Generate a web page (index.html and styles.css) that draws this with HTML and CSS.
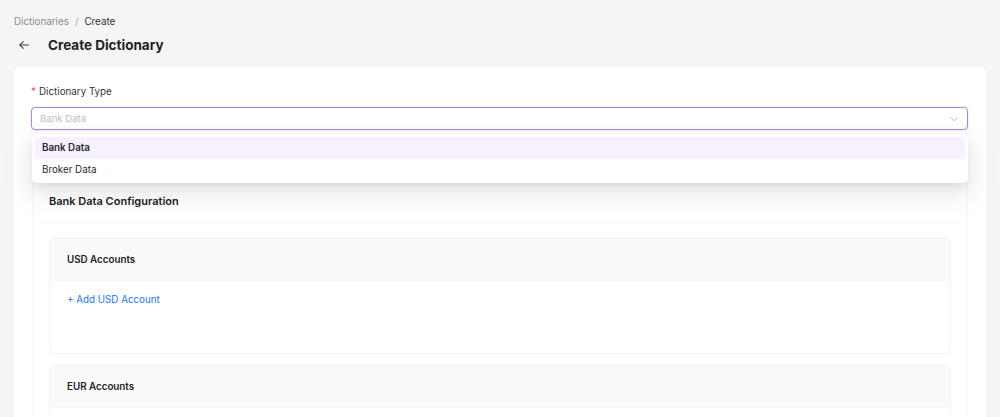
FILE: index.html
```html
<!DOCTYPE html>
<html lang="en">
<head>
    <meta charset="UTF-8">
    <meta name="viewport" content="width=device-width, initial-scale=1.0">
    <title>Create Dictionary</title>
    <link rel="stylesheet" href="styles.css">
</head>
<body>
    <div class="page">
        <div class="breadcrumb">
            <span class="crumb-link">Dictionaries</span>
            <span class="crumb-sep">/</span>
            <span class="crumb-current">Create</span>
        </div>
        <div class="page-header">
            <button class="back-btn" aria-label="Back">
                <svg width="12" height="12" viewBox="0 0 16 16" fill="none" stroke="currentColor" stroke-width="1.5" stroke-linecap="round" stroke-linejoin="round">
                    <path d="M14 8H2.5"/>
                    <path d="M7 3.5L2.5 8L7 12.5"/>
                </svg>
            </button>
            <h1>Create Dictionary</h1>
        </div>

        <div class="main-card">
            <div class="form-item">
                <label class="form-label"><span class="required">*</span>Dictionary Type</label>
                <div class="select-wrap">
                    <div class="select">
                        <span class="select-placeholder">Bank Data</span>
                        <svg class="select-arrow" width="10" height="10" viewBox="0 0 16 16" fill="none" stroke="currentColor" stroke-width="1.6" stroke-linecap="round" stroke-linejoin="round">
                            <path d="M3 6l5 5 5-5"/>
                        </svg>
                    </div>
                    <div class="dropdown">
                        <div class="option option-active">Bank Data</div>
                        <div class="option">Broker Data</div>
                    </div>
                </div>
            </div>

            <div class="config-card">
                <div class="config-head">Bank Data Configuration</div>
                <div class="config-body">
                    <div class="sub-card">
                        <div class="sub-head">USD Accounts</div>
                        <div class="sub-body">
                            <a class="add-link" href="#">+ Add USD Account</a>
                        </div>
                    </div>
                    <div class="sub-card">
                        <div class="sub-head">EUR Accounts</div>
                        <div class="sub-body"></div>
                    </div>
                </div>
            </div>
        </div>
    </div>
</body>
</html>
```

FILE: styles.css
```css
* {
    margin: 0;
    padding: 0;
    box-sizing: border-box;
}

body {
    font-family: 'Inter', 'Liberation Sans', sans-serif;
    background: #f5f5f5;
    color: #1f1f1f;
    overflow: hidden;
    height: 100vh;
}

.page {
    padding: 15px 14px 0 14px;
}

.breadcrumb {
    font-size: 9.8px;
    line-height: 14px;
    display: flex;
    gap: 6px;
}

.crumb-link {
    color: #8c8c8c;
}

.crumb-sep {
    color: #a6a6a6;
}

.crumb-current {
    color: #333;
}

.page-header {
    display: flex;
    align-items: center;
    height: 31px;
    gap: 14px;
}

.back-btn {
    border: none;
    background: none;
    color: #444;
    width: 20px;
    height: 20px;
    display: flex;
    align-items: center;
    justify-content: center;
}

.page-header h1 {
    font-size: 13.5px;
    font-weight: 650;
    color: #222;
}

.main-card {
    margin-top: 7px;
    background: #fff;
    border-radius: 6px;
    padding: 17px 18px 0 17px;
    height: 400px;
}

.form-item {
    margin-bottom: 49px;
}

.form-label {
    display: block;
    font-size: 9.8px;
    color: #333;
    line-height: 14px;
    margin-bottom: 8px;
}

.required {
    color: #ff4d4f;
    margin-right: 3px;
    font-size: 10px;
}

.select-wrap {
    position: relative;
}

.select {
    height: 23px;
    border: 1px solid #a48ad8;
    border-radius: 4px;
    display: flex;
    align-items: center;
    justify-content: space-between;
    padding: 0 8px;
    box-shadow: 0 0 0 1px rgba(164, 138, 216, 0.12);
}

.select-placeholder {
    font-size: 9.6px;
    color: #bfbfbf;
}

.select-arrow {
    color: #bfbfbf;
}

.dropdown {
    position: absolute;
    top: 28px;
    left: 1px;
    right: 0;
    background: #fff;
    border-radius: 5px;
    padding: 2px 3px;
    box-shadow: 0 6px 16px rgba(0, 0, 0, 0.08), 0 3px 6px -4px rgba(0, 0, 0, 0.12), 0 9px 28px 8px rgba(0, 0, 0, 0.05);
    z-index: 10;
}

.option {
    font-size: 9.8px;
    color: #2a2a2a;
    height: 22px;
    line-height: 22px;
    padding: 0 7px;
    border-radius: 3px;
}

.option-active {
    background: #f7f0ff;
    font-weight: 600;
}

.config-card {
    border: 1px solid #f5f5f5;
    border-radius: 6px;
    margin-left: 1px;
}

.config-head {
    height: 43px;
    display: flex;
    align-items: center;
    padding: 0 16px;
    font-size: 11px;
    font-weight: 600;
    color: #222;
    border-bottom: 1px solid #f7f7f7;
}

.config-body {
    padding: 15px 16px;
    display: flex;
    flex-direction: column;
    gap: 11px;
}

.sub-card {
    border: 1px solid #f3f3f3;
    border-radius: 5px;
    overflow: hidden;
}

.sub-head {
    height: 42px;
    background: #fafafa;
    display: flex;
    align-items: center;
    padding: 0 17px;
    font-size: 9.8px;
    font-weight: 600;
    color: #222;
    border-bottom: 1px solid #f7f7f7;
}

.sub-body {
    height: 72px;
    padding: 9px 17px;
    line-height: 14px;
}

.add-link {
    font-size: 9.8px;
    color: #1677ff;
    text-decoration: none;
}
```
